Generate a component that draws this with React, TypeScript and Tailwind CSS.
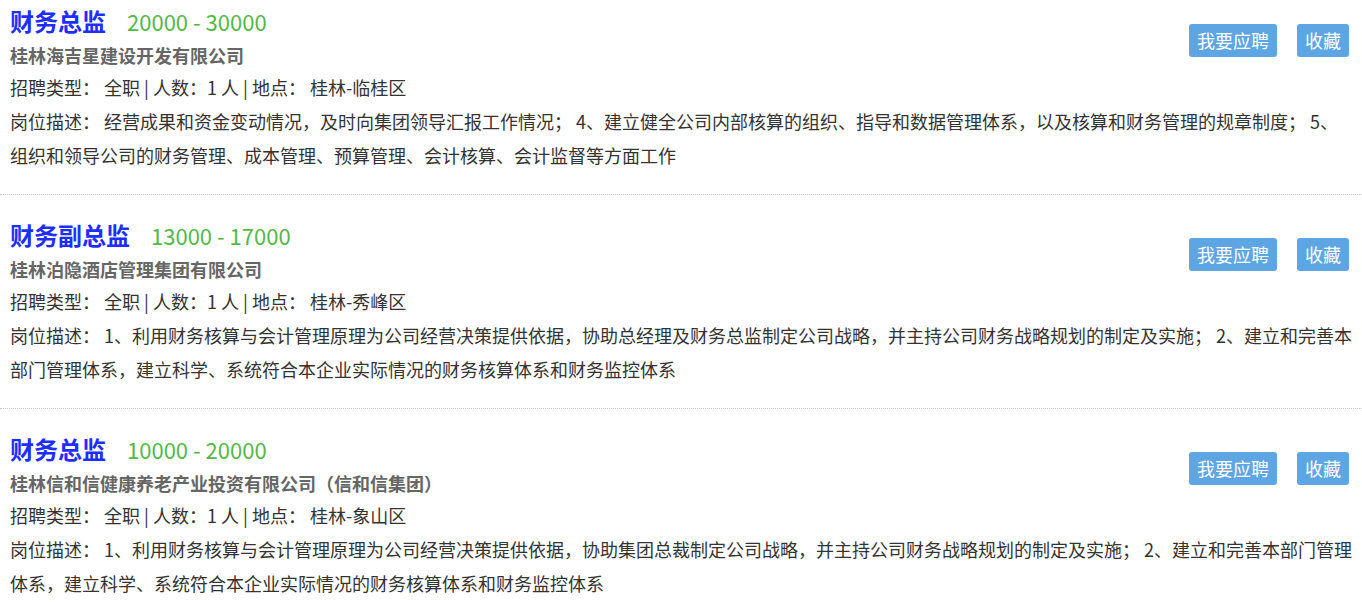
import React from 'react';

interface Job {
    title: string;
    salary: string;
    company: string;
    type: string;
    count: string;
    place: string;
    desc: string;
}

const jobs: Job[] = [
    {
        title: '财务总监',
        salary: '20000 - 30000',
        company: '桂林海吉星建设开发有限公司',
        type: '全职',
        count: '1',
        place: '桂林-临桂区',
        desc: '经营成果和资金变动情况，及时向集团领导汇报工作情况； 4、建立健全公司内部核算的组织、指导和数据管理体系，以及核算和财务管理的规章制度； 5、组织和领导公司的财务管理、成本管理、预算管理、会计核算、会计监督等方面工作',
    },
    {
        title: '财务副总监',
        salary: '13000 - 17000',
        company: '桂林泊隐酒店管理集团有限公司',
        type: '全职',
        count: '1',
        place: '桂林-秀峰区',
        desc: '1、利用财务核算与会计管理原理为公司经营决策提供依据，协助总经理及财务总监制定公司战略，并主持公司财务战略规划的制定及实施； 2、建立和完善本部门管理体系，建立科学、系统符合本企业实际情况的财务核算体系和财务监控体系',
    },
    {
        title: '财务总监',
        salary: '10000 - 20000',
        company: '桂林信和信健康养老产业投资有限公司（信和信集团）',
        type: '全职',
        count: '1',
        place: '桂林-象山区',
        desc: '1、利用财务核算与会计管理原理为公司经营决策提供依据，协助集团总裁制定公司战略，并主持公司财务战略规划的制定及实施； 2、建立和完善本部门管理体系，建立科学、系统符合本企业实际情况的财务核算体系和财务监控体系',
    },
];

function JobItem({ job, first }: { job: Job; first: boolean }) {
    return (
        <div className={`${first ? 'pt-0' : 'pt-[19px]'} pb-[22px] pl-[10px] pr-[6px] border-b border-dotted border-[#c8c8c8]`}>
            {/* Actions */}
            <div className="float-right mt-[24px] mr-[7px] flex gap-[20px]">
                <button className="h-[33px] px-[8px] rounded-[3px] bg-[#5da5e3] text-white text-[18px] leading-[33px]">
                    我要应聘
                </button>
                <button className="h-[33px] px-[8px] rounded-[3px] bg-[#5da5e3] text-white text-[18px] leading-[33px]">
                    收藏
                </button>
            </div>

            <div className="flex items-baseline h-[42px] leading-[42px]">
                <span className="text-[24px] font-bold text-[#1d2fff]">{job.title}</span>
                <span className="ml-[21px] text-[22px] text-[#52b947]">{job.salary}</span>
            </div>
            <div className="h-[26px] leading-[26px] text-[18px] font-bold text-[#666]">{job.company}</div>
            <div className="mt-[3px] leading-[33px] text-[18px] text-[#333]">
                招聘类型： 全职 | 人数：{job.count} 人 | 地点： {job.place}
            </div>
            <p className="leading-[34px] text-[18px] text-[#333]">岗位描述： {job.desc}</p>
        </div>
    );
}

export default function App() {
    return (
        <div
            className="w-[1362px] h-[602px] overflow-hidden bg-white"
            style={{ fontFamily: '"Noto Sans CJK SC", "Noto Sans", sans-serif' }}
        >
            {jobs.map((job, i) => (
                <JobItem key={i} job={job} first={i === 0} />
            ))}
        </div>
    );
}
